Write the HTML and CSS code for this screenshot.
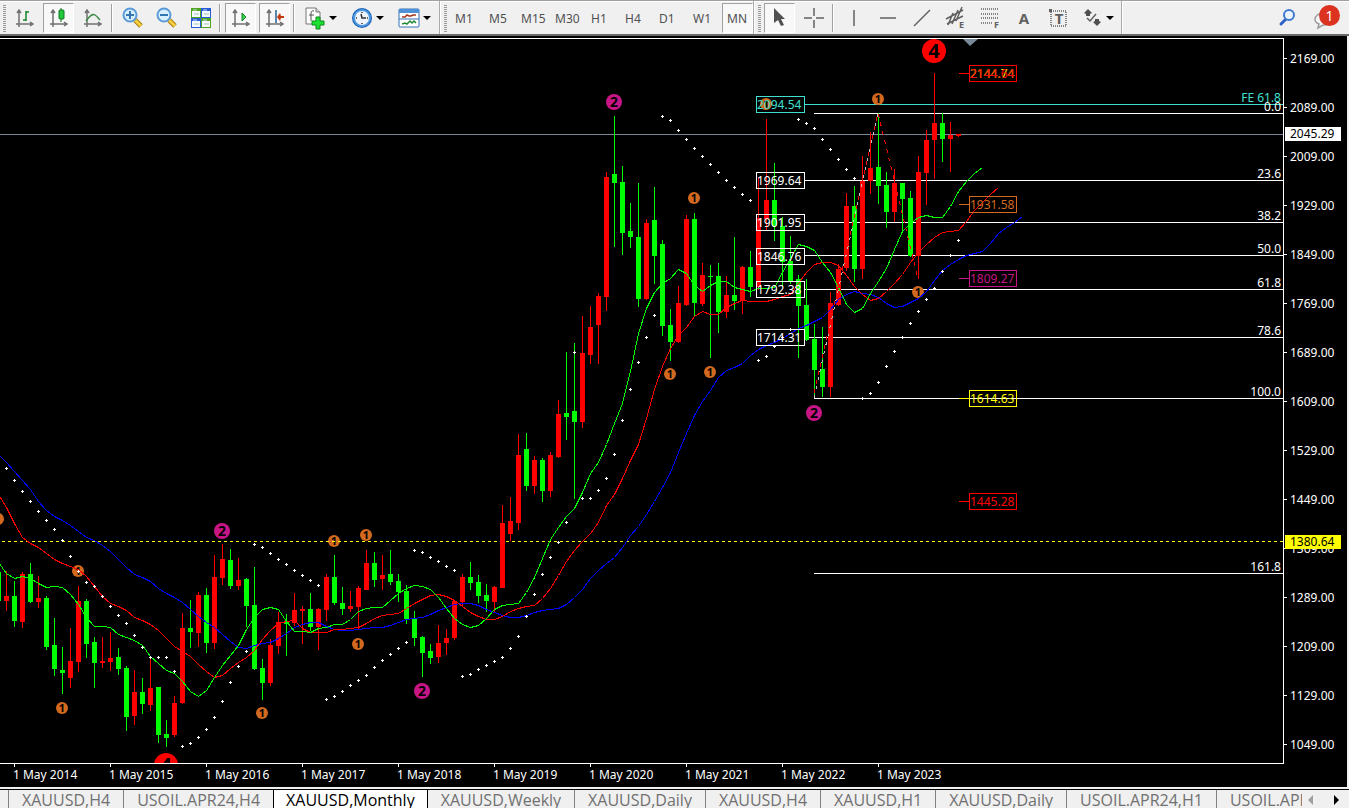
FILE: index.html
```
<!DOCTYPE html>
<html lang="en">
<head>
    <meta charset="UTF-8">
    <meta name="viewport" content="width=device-width, initial-scale=1.0">
    <title>XAUUSD,Monthly</title>
    <link rel="stylesheet" href="styles.css">
</head>
<body>
    <header class="toolbar">
        <div class="group">
            <span class="grip"></span>
            <button class="tool" aria-label="Bar chart">
                <svg width="20" height="20" viewBox="0 0 20 20"><path class="axes" d="M4 19V3M1 16H17M2 5L4 2L6 5M15 14L18 16L15 18"/><path d="M11 3V13M11 4H14M8 12H11" stroke="#14862a" stroke-width="1.500" fill="none"/></svg>
            </button>
            <button class="tool pressed" aria-label="Candlesticks">
                <svg width="20" height="20" viewBox="0 0 20 20"><path class="axes" d="M4 19V3M1 16H17M2 5L4 2L6 5M15 14L18 16L15 18"/><path d="M12 0V14" stroke="#0b6d1b"/><rect x="10" y="2" width="5" height="9" rx="1" fill="#22c83c" stroke="#0b7a1d"/></svg>
            </button>
            <button class="tool" aria-label="Line chart">
                <svg width="20" height="20" viewBox="0 0 20 20"><path class="axes" d="M4 19V3M1 16H17M2 5L4 2L6 5M15 14L18 16L15 18"/><path d="M3 13C6 9 9 5 12 7S15 10 17 12" stroke="#3b8a48" stroke-width="1.500" fill="none"/></svg>
            </button>
            <span class="sep"></span>
            <button class="tool" aria-label="Zoom in">
                <svg width="22" height="22" viewBox="0 0 22 22"><path d="M13 13L19 19" stroke="#a87a12" stroke-width="5"/><path d="M13 13L19 19" stroke="#f5cf3e" stroke-width="3"/><circle cx="8" cy="8" r="6.500" fill="#d9f0ff" stroke="#5a9bd8" stroke-width="2"/><path d="M4 8H12M8 4V12" stroke="#3576b0" stroke-width="2"/></svg>
            </button>
            <button class="tool" aria-label="Zoom out">
                <svg width="22" height="22" viewBox="0 0 22 22"><path d="M13 13L19 19" stroke="#a87a12" stroke-width="5"/><path d="M13 13L19 19" stroke="#f5cf3e" stroke-width="3"/><circle cx="8" cy="8" r="6.500" fill="#d9f0ff" stroke="#5a9bd8" stroke-width="2"/><path d="M4 8H12" stroke="#3576b0" stroke-width="2"/></svg>
            </button>
            <button class="tool" aria-label="Tile windows">
                <svg width="22" height="22" viewBox="0 0 22 22"><path d="M1 1H11V11H1ZM11 11H21V21H11Z" fill="#4fa51f"/><path d="M11 1H21V11H11ZM1 11H11V21H1Z" fill="#2a5bd7"/><path d="M2 4H10V10H2ZM12 14H20V20H12ZM12 4H20V10H12ZM2 14H10V20H2Z" fill="#f4f8ff"/><path d="M3 3H7M13 3H17M3 13H7M13 13H17" stroke="#c9dcf5"/><path d="M4 7H9M14 7H19M4 17H9M14 17H19" stroke="#a9c7b4"/></svg>
            </button>
            <span class="sep"></span>
            <button class="tool pressed" aria-label="Auto scroll">
                <svg width="20" height="20" viewBox="0 0 20 20"><path class="axes" d="M4 19V3M1 16H17M2 5L4 2L6 5M15 14L18 16L15 18"/><path d="M11 5V13L15 9Z" fill="#35d04c" stroke="#12822a"/></svg>
            </button>
            <button class="tool pressed" aria-label="Chart shift">
                <svg width="20" height="20" viewBox="0 0 20 20"><path class="axes" d="M4 19V3M1 16H17M2 5L4 2L6 5M15 14L18 16L15 18"/><path d="M11 2V15" stroke="#2a6291" stroke-width="1.500"/><path d="M12 9L15 5L16 8H19V10H16L15 13Z" fill="#c43a10"/></svg>
            </button>
            <span class="sep"></span>
            <button class="tool drop" aria-label="Indicators">
                <svg width="22" height="24" viewBox="0 0 22 24"><path d="M2 2H12L16 6V18H2Z" fill="#fdfdfd" stroke="#777"/><path d="M12 2V6H16" fill="#ddd" stroke="#777"/><path d="M10 5Q7 4 7 8V15M5 9H10" stroke="#555" fill="none"/><path d="M12 11H16V15H20V19H16V23H12V19H8V15H12Z" fill="#1ee032" stroke="#0b8a1a"/></svg>
                <span class="caret"></span>
            </button>
            <button class="tool drop" aria-label="Periods">
                <svg width="22" height="22" viewBox="0 0 22 22"><circle cx="11" cy="11" r="10" fill="#1a5fb4"/><circle cx="11" cy="11" r="9" fill="#4b97e2"/><circle cx="11" cy="11" r="7" fill="#eef4fa"/><path d="M10 7L11 11H15M11 5V6M11 16V17M5 11H6M16 11H17" stroke="#333" stroke-width="1.500" fill="none"/></svg>
                <span class="caret"></span>
            </button>
            <button class="tool drop" aria-label="Templates">
                <svg width="22" height="22" viewBox="0 0 22 22"><rect x="1" y="2" width="20" height="18" rx="1" fill="#fff" stroke="#3573b5"/><path d="M1 2H21V6H1Z" fill="#4f91d6"/><path d="M1 12H21" stroke="#3573b5"/><path d="M4 10H7L9 8L11 9H13L15 8H18" stroke="#a3341b" stroke-width="1.500" fill="none"/><path d="M4 17L7 16L9 17L12 14L14 16L16 14L18 16" stroke="#228a33" stroke-width="1.500" fill="none"/></svg>
                <span class="caret"></span>
            </button>
        </div>
        <div class="group frames">
            <span class="grip"></span>
            <button class="tool">M1</button>
            <button class="tool">M5</button>
            <button class="tool">M15</button>
            <button class="tool">M30</button>
            <button class="tool">H1</button>
            <button class="tool">H4</button>
            <button class="tool">D1</button>
            <button class="tool">W1</button>
            <button class="tool pressed">MN</button>
        </div>
        <div class="group objects">
            <span class="grip"></span>
            <button class="tool pressed" aria-label="Cursor">
                <svg width="20" height="20" viewBox="0 0 20 20"><path d="M4 0V15L8 12L11 18L14 17L11 11H15Z" fill="#505050"/></svg>
            </button>
            <button class="tool" aria-label="Crosshair">
                <svg width="20" height="20" viewBox="0 0 20 20"><path class="ink" d="M10 0V8M10 12V20M0 10H8M12 10H20"/></svg>
            </button>
            <span class="sep"></span>
            <button class="tool" aria-label="Vertical line">
                <svg width="20" height="20" viewBox="0 0 20 20"><path class="ink" d="M10 2V18"/></svg>
            </button>
            <button class="tool" aria-label="Horizontal line">
                <svg width="20" height="20" viewBox="0 0 20 20"><path class="ink" d="M2 10H18"/></svg>
            </button>
            <button class="tool" aria-label="Trendline">
                <svg width="20" height="20" viewBox="0 0 20 20"><path class="ink" d="M2 18L18 2"/></svg>
            </button>
            <button class="tool" aria-label="Equidistant channel">
                <svg width="22" height="22" viewBox="0 0 22 22"><path class="ink" d="M1 12L18 3M2 17L18 9M3 18L8 6M7 17L13 3M11 14L17 0"/><text x="14" y="21" class="letter">E</text></svg>
            </button>
            <button class="tool" aria-label="Fibonacci retracement">
                <svg width="22" height="22" viewBox="0 0 22 22"><path class="ink dots" d="M2 2H20M2 7H20M2 11H20M2 16H14"/><text x="15" y="21" class="letter">F</text></svg>
            </button>
            <button class="tool" aria-label="Text">
                <svg width="20" height="20" viewBox="0 0 20 20"><text x="10" y="16" class="letter big">A</text></svg>
            </button>
            <button class="tool" aria-label="Text label">
                <svg width="20" height="20" viewBox="0 0 20 20"><rect class="ink dots" x="3" y="3" width="15" height="15"/><path d="M1 1H4V4H1Z" fill="#606060"/><text x="11" y="16" class="letter big">T</text></svg>
            </button>
            <button class="tool drop" aria-label="Arrows">
                <svg width="22" height="22" viewBox="0 0 22 22"><path d="M7 2L11 6L9 7V9H5V7L3 6ZM16 19L20 15L18 14V12H14V14L12 15Z" fill="#505050"/><path class="ink" d="M6 11L9 14L15 7"/></svg>
                <span class="caret"></span>
            </button>
        </div>
        <div class="right">
            <button class="tool" aria-label="Search">
                <svg width="20" height="20" viewBox="0 0 20 20"><path d="M3 16L8 11" stroke="#2d62c4" stroke-width="3" stroke-linecap="round"/><circle cx="11" cy="7" r="5" fill="#eaf3ff" stroke="#3f78cf" stroke-width="2"/></svg>
            </button>
            <button class="tool chat" aria-label="Messages">
                <svg width="22" height="22" viewBox="0 0 22 22"><path d="M9 6C14 6 17 9 17 13S14 18 9 18L4 21L5 17C2 16 1 14 1 12S4 6 9 6Z" fill="#f8f8f8" stroke="#9a9a9a" stroke-width="1.500"/></svg>
                <span class="badge">1</span>
            </button>
        </div>
    </header>

    <main class="chart">
        <div class="plot">
            <svg id="plot" viewBox="0 39 1283 724" role="img" aria-label="XAUUSD monthly chart"></svg>
        </div>
        <div class="price-axis">
            <ul>
                <li>2169.00</li>
                <li>2089.00</li>
                <li>2009.00</li>
                <li>1929.00</li>
                <li>1849.00</li>
                <li>1769.00</li>
                <li>1689.00</li>
                <li>1609.00</li>
                <li>1529.00</li>
                <li>1449.00</li>
                <li>1369.00</li>
                <li>1289.00</li>
                <li>1209.00</li>
                <li>1129.00</li>
                <li>1049.00</li>
            </ul>
            <span class="tag bid">2045.29</span>
            <span class="tag level">1380.64</span>
        </div>
        <ul class="time-axis">
            <li>1 May 2014</li>
            <li>1 May 2015</li>
            <li>1 May 2016</li>
            <li>1 May 2017</li>
            <li>1 May 2018</li>
            <li>1 May 2019</li>
            <li>1 May 2020</li>
            <li>1 May 2021</li>
            <li>1 May 2022</li>
            <li>1 May 2023</li>
        </ul>
    </main>

    <footer class="tabs">
        <nav>
            <button>XAUUSD,H4</button>
            <button>USOIL.APR24,H4</button>
            <button class="active">XAUUSD,Monthly</button>
            <button>XAUUSD,Weekly</button>
            <button>XAUUSD,Daily</button>
            <button>XAUUSD,H4</button>
            <button>XAUUSD,H1</button>
            <button>XAUUSD,Daily</button>
            <button>USOIL.APR24,H1</button>
            <button>USOIL.APR24,Daily</button>
        </nav>
        <div class="scroll">
            <button class="prev" aria-label="Previous tabs"></button>
            <button class="next" aria-label="Next tabs"></button>
        </div>
    </footer>
    <script src="chart.js"></script>
</body>
</html>
```

FILE: styles.css
```
* {
    box-sizing: border-box;
}

body {
    margin: 0;
    height: 100vh;
    display: flex;
    flex-direction: column;
    overflow: hidden;
    background: #f0f0f0;
    font-family: "Noto Sans", Tahoma, sans-serif;
    font-size: 12px;
}

ul {
    list-style: none;
    margin: 0;
    padding: 0;
}

button {
    font: inherit;
    border: none;
    background: none;
    padding: 0;
    cursor: pointer;
}

/* toolbar */
.toolbar {
    display: flex;
    flex: none;
    height: 36px;
    border-top: 1px solid #a0a0a0;
    border-bottom: 2px solid #696969;
    box-shadow: inset 0 1px #fff;
}

.group {
    display: flex;
    align-items: center;
    gap: 3px;
    padding: 1px 2px 0 3px;
    border-right: 2px groove #fff;
}

.frames {
    padding-right: 0;
}

.objects {
    padding-right: 1px;
}

.grip {
    width: 3px;
    height: 27px;
    background: repeating-linear-gradient(#999 0 1px, #f0f0f0 1px 2px);
}

.sep {
    width: 2px;
    height: 28px;
    margin-right: 1px;
    border-left: 1px solid #a0a0a0;
    border-right: 1px solid #fff;
}

.tool {
    display: flex;
    align-items: center;
    justify-content: center;
    width: 31px;
    height: 30px;
    color: #505050;
}

.tool svg {
    overflow: visible;
}

.pressed {
    border: 1px solid #fff;
    border-top-color: #a0a0a0;
    border-left-color: #a0a0a0;
    background: #f8f8f8;
}

.drop {
    width: 44px;
    justify-content: flex-start;
    padding-left: 5px;
    gap: 3px;
}

.caret {
    border: 4px solid transparent;
    border-top-color: #000;
    border-bottom: none;
}

.frames .tool {
    justify-content: flex-start;
    padding-left: 5px;
}

.frames .tool:nth-child(4),
.frames .tool:nth-child(5) {
    padding-left: 3px;
}

.frames .pressed {
    padding-left: 4px;
}

.axes {
    fill: none;
    stroke: #707070;
    stroke-width: 1.5;
}

.ink {
    fill: none;
    stroke: #606060;
    stroke-width: 1.5;
}

.dots {
    stroke-dasharray: 1 1;
}

.letter {
    font-size: 9px;
    font-weight: bold;
    fill: #606060;
}

.big {
    font-size: 15px;
    text-anchor: middle;
}

.right {
    display: flex;
    align-items: center;
    gap: 6px;
    margin-left: auto;
    padding-right: 9px;
}

.chat {
    position: relative;
}

.badge {
    position: absolute;
    top: 2px;
    right: 0;
    width: 21px;
    height: 21px;
    border-radius: 50%;
    background: #dc3220;
    color: #fff;
    font-size: 14px;
    line-height: 21px;
    text-align: center;
}

/* chart */
.chart {
    display: grid;
    grid-template-columns: 1fr 63px;
    padding-top: 2px;
    margin-right: 2px;
    background: #000;
    color: #fff;
}

.plot {
    border: 1px solid #fff;
    border-left: none;
}

.plot svg {
    display: block;
    width: 100%;
}

.price-axis {
    position: relative;
}

.price-axis ul {
    margin: -4px 0 -5px;
}

.price-axis li {
    display: flex;
    align-items: center;
    gap: 3px;
    height: 49px;
}

.price-axis li::before {
    content: "";
    width: 3px;
    height: 1px;
    background: #fff;
}

.tag {
    position: absolute;
    left: 1px;
    width: 56px;
    padding-left: 5px;
    line-height: 14px;
    color: #000;
}

.bid {
    top: 89px;
    background: #fff;
}

.level {
    top: 497px;
    background: #ff0;
}

.time-axis {
    grid-column: 1 / 3;
    display: flex;
    height: 23px;
    padding-left: 13px;
}

.time-axis li {
    width: 96px;
    line-height: 16px;
}

.time-axis li::before {
    content: "";
    display: block;
    width: 1px;
    height: 3px;
    margin-left: 1px;
    background: #fff;
}

/* plot items */
.up {
    fill: #f00;
}

.down {
    fill: #0f0;
}

.line {
    fill: none;
    stroke-width: 1;
}

.crisp {
    shape-rendering: crispEdges;
}

.label {
    font-size: 12px;
}

.mark {
    font-weight: bold;
    text-anchor: middle;
}

/* chart tabs */
.tabs {
    display: flex;
    flex: 1;
    min-height: 19px;
    margin-top: 2px;
    border-top: 1px solid #000;
    overflow: hidden;
}

.tabs nav {
    display: flex;
    flex: 1;
    min-width: 0;
    padding-left: 8px;
    overflow: hidden;
}

.tabs nav button {
    flex: none;
    height: 21px;
    padding: 0 13px;
    border-left: 1px solid #808080;
    font-family: "Open Sans", "Segoe UI", sans-serif;
    font-size: 16px;
    line-height: 21px;
    color: #707070;
}

.tabs nav .active {
    padding: 0 12px;
    background: #fff;
    color: #000;
    border-left-color: #000;
}

.tabs nav .active + button {
    border-left-color: #000;
}

.scroll {
    display: flex;
    gap: 21px;
    width: 47px;
    height: 20px;
    padding-left: 6px;
    align-items: center;
}

.scroll button {
    border: 5px solid transparent;
}

.scroll .prev {
    border-left: none;
    border-right-color: #a0a0a0;
}

.scroll .next {
    border-right: none;
    border-left-color: #000;
}
```

FILE: chart.js
```
const svg = document.getElementById('plot');
const STEP = 8;
const FIRST = -2;

// one row per month: high, body top, body bottom, low, 1 = up / 0 = down
const candles = [
    [572, 572, 601, 601, 0], [571, 596, 601, 611, 1], [581, 596, 621, 627, 0], [572, 574, 622, 628, 1],
    [563, 574, 602, 603, 0], [576, 598, 602, 608, 1], [596, 598, 647, 650, 0], [618, 645, 669, 676, 0],
    [647, 670, 673, 694, 0], [628, 661, 678, 688, 1], [586, 601, 662, 672, 1], [599, 601, 644, 658, 0],
    [637, 642, 663, 688, 0], [637, 661, 663, 668, 1], [632, 658, 662, 671, 1], [648, 657, 669, 675, 0],
    [666, 668, 717, 731, 0], [670, 692, 716, 725, 1], [678, 692, 704, 714, 0], [657, 688, 705, 711, 1],
    [687, 687, 735, 743, 0], [720, 734, 738, 747, 0], [696, 703, 735, 737, 1], [613, 628, 703, 704, 1],
    [600, 628, 632, 648, 0], [592, 595, 633, 647, 1], [588, 595, 643, 653, 0], [555, 577, 643, 649, 1],
    [544, 559, 578, 585, 1], [549, 560, 586, 589, 0], [558, 580, 586, 590, 1], [578, 579, 606, 627, 0],
    [567, 605, 669, 670, 0], [659, 668, 683, 700, 0], [639, 645, 683, 686, 1], [612, 622, 646, 654, 1],
    [614, 622, 624, 656, 0], [593, 610, 623, 626, 1], [606, 609, 611, 644, 1], [593, 609, 627, 631, 0],
    [608, 609, 627, 650, 1], [574, 577, 610, 621, 1], [555, 577, 603, 605, 0], [587, 603, 609, 615, 0],
    [591, 606, 609, 612, 1], [586, 588, 607, 630, 1], [550, 563, 590, 590, 1], [552, 563, 580, 587, 0],
    [555, 575, 579, 590, 1], [550, 574, 582, 585, 0], [574, 581, 592, 602, 0], [585, 591, 619, 624, 0],
    [611, 619, 638, 646, 0], [636, 637, 653, 677, 0], [644, 651, 658, 664, 0], [625, 643, 657, 663, 1],
    [629, 638, 643, 655, 1], [600, 601, 638, 640, 1], [574, 577, 602, 606, 1], [562, 577, 583, 590, 0],
    [575, 582, 596, 603, 0], [584, 595, 601, 612, 0], [586, 587, 602, 612, 1], [505, 523, 588, 588, 1],
    [497, 521, 534, 541, 1], [434, 455, 523, 530, 1], [433, 449, 486, 491, 0], [456, 460, 486, 494, 1],
    [458, 460, 491, 502, 0], [452, 455, 491, 497, 1], [400, 414, 457, 458, 1], [352, 413, 417, 440, 0],
    [343, 411, 422, 499, 0], [316, 353, 422, 428, 1], [306, 327, 355, 364, 1], [293, 296, 325, 364, 1],
    [172, 177, 297, 311, 1], [116, 174, 183, 247, 0], [166, 182, 233, 255, 0], [203, 231, 237, 248, 0],
    [183, 237, 299, 307, 0], [219, 223, 299, 300, 1], [187, 220, 256, 284, 0], [240, 244, 326, 336, 0],
    [309, 325, 342, 361, 0], [286, 303, 342, 343, 1], [215, 219, 305, 306, 1], [213, 219, 303, 316, 0],
    [263, 275, 304, 306, 1], [265, 276, 277, 358, 0], [263, 276, 312, 333, 0], [276, 295, 312, 318, 1],
    [237, 295, 301, 310, 0], [266, 267, 301, 314, 1], [251, 267, 287, 297, 0], [177, 218, 287, 290, 1],
    [119, 200, 219, 230, 1], [163, 200, 226, 241, 0], [217, 226, 262, 287, 0], [236, 261, 281, 284, 0],
    [275, 279, 306, 358, 0], [279, 305, 340, 341, 0], [324, 339, 370, 398, 0], [327, 369, 387, 397, 0],
    [292, 303, 387, 397, 1], [264, 269, 305, 306, 1], [193, 206, 268, 271, 1], [186, 206, 269, 282, 0],
    [156, 181, 269, 279, 1], [132, 168, 181, 194, 1], [113, 167, 186, 204, 0], [172, 185, 212, 228, 0],
    [169, 183, 212, 222, 1], [183, 183, 199, 233, 0], [191, 198, 256, 257, 0], [156, 172, 256, 279, 1],
    [130, 140, 173, 205, 1], [73, 123, 140, 179, 1], [113, 123, 139, 162, 0], [122, 135, 139, 172, 1],
    [134, 134, 136, 137, 1]
];

// moving averages, one value per month
const fast = [562, 573, 578, 576, 578, 583, 587, 586, 587, 594, 604, 617, 626, 626, 627, 634, 637, 640, 645, 656,
    663, 670, 673, 681, 691, 696, 690, 677, 665, 655, 645, 629, 617, 609, 607, 609, 621, 631, 631, 632,
    628, 627, 624, 624, 619, 611, 608, 607, 607, 600, 593, 588, 585, 586, 589, 597, 608, 618, 624, 627,
    625, 618, 609, 605, 604, 603, 592, 577, 558, 539, 527, 516, 508, 492, 473, 462, 444, 423, 403, 371,
    333, 308, 292, 283, 278, 269, 273, 285, 291, 285, 281, 281, 287, 289, 291, 288, 288, 287, 272, 258,
    244, 246, 250, 262, 272, 287, 304, 312, 308, 293, 281, 268, 249, 231, 223, 217, 215, 217, 217, 206,
    191, 181, 173, 167];

const middle = [494, 507, 523, 537, 543, 547, 553, 559, 563, 566, 569, 576, 586, 596, 603, 606, 610, 617, 620, 624,
    630, 638, 646, 651, 656, 664, 671, 677, 675, 668, 662, 657, 650, 639, 630, 623, 621, 620, 628, 632,
    632, 632, 629, 629, 628, 627, 623, 618, 615, 614, 613, 608, 603, 599, 595, 594, 596, 600, 606, 612,
    616, 619, 619, 616, 611, 608, 606, 605, 598, 588, 575, 561, 550, 541, 533, 522, 505, 494, 478, 460,
    444, 418, 389, 366, 348, 335, 327, 316, 311, 314, 314, 307, 303, 300, 301, 301, 301, 299, 296, 294,
    283, 272, 264, 262, 262, 265, 275, 286, 294, 300, 298, 291, 283, 274, 262, 252, 244, 237, 232, 231,
    230, 221, 210, 202, 194, 187];

const slow = [454, 462, 471, 480, 489, 501, 510, 516, 520, 525, 531, 537, 540, 545, 551, 559, 567, 574, 577, 581,
    588, 593, 597, 602, 609, 616, 622, 627, 634, 641, 647, 648, 645, 643, 642, 638, 633, 627, 624, 622,
    622, 626, 629, 630, 630, 629, 628, 627, 627, 625, 622, 619, 618, 617, 614, 610, 607, 604, 603, 603,
    605, 609, 612, 615, 617, 617, 615, 612, 610, 609, 608, 604, 597, 589, 578, 570, 563, 557, 547, 535,
    526, 514, 501, 487, 472, 452, 433, 415, 401, 390, 377, 370, 367, 363, 355, 349, 345, 342, 338, 333,
    328, 325, 321, 317, 309, 299, 294, 291, 293, 294, 297, 303, 307, 306, 302, 298, 291, 280, 270, 264,
    259, 255, 253, 251, 243, 233, 227, 222, 216];

// parabolic SAR, starts one month later
const sar = [468, 480, 491, 501, 511, 520, 529, 540, 556, 571, 582, 586, 596, 606, 615, 623, 635, 647, 657, 657,
    657, 671, 746, 743, 737, 729, 717, 701, 682, 666, 651, 544, 547, 553, 559, 564, 570, 575, 580, 585,
    699, 696, 691, 685, 680, 675, 667, 660, 654, 648, 642, 550, 552, 557, 561, 566, 570, 676, 674, 669,
    665, 661, 657, 648, 636, 616, 594, 574, 557, 542, 522, 352, 498, 498, 490, 478, 454, 420, 389, 362,
    337, 315, 116, 120, 130, 139, 148, 156, 164, 172, 180, 187, 194, 200, 360, 356, 346, 337, 329, 119,
    123, 128, 139, 149, 159, 169, 178, 398, 393, 382, 366, 351, 337, 323, 311, 299, 288, 271, 255, 240];

const fibo = [['0.0', 113], ['23.6', 180], ['38.2', 222], ['50.0', 255], ['61.8', 289], ['78.6', 337], ['100.0', 398], ['161.8', 573]];

const boxes = [
    [756, 104, '2094.54', '#40e0d0'], [756, 180, '1969.64', '#fff'], [756, 222, '1901.95', '#fff'],
    [756, 256, '1846.76', '#fff'], [756, 289, '1792.38', '#fff'], [756, 337, '1714.31', '#fff'],
    [969, 73, '2144.64', '#f00'], [969, 204, '1931.58', '#d2691e'], [969, 278, '1809.27', '#c71585'],
    [969, 398, '1614.63', '#ff0'], [969, 501, '1445.28', '#f00']
];

// swing marks: x, y, level
const marks = [
    [-2, 519, 1], [62, 708, 1], [78, 571, 1], [262, 713, 1], [334, 541, 1], [358, 644, 1], [366, 535, 1],
    [670, 374, 1], [694, 198, 1], [710, 372, 1], [766, 104, 1], [878, 99, 1], [918, 292, 1],
    [222, 531, 2], [422, 691, 2], [614, 102, 2], [814, 413, 2], [166, 765, 4], [934, 51, 4]
];
const markStyle = {
    1: { r: 6, color: '#d2691e', size: 11 },
    2: { r: 8, color: '#c71585', size: 14 },
    4: { r: 12, color: '#f00', size: 20 }
};

function add(name, attrs, text) {
    const el = document.createElementNS('http://www.w3.org/2000/svg', name);
    for (const key in attrs) {
        el.setAttribute(key, attrs[key]);
    }
    if (text) {
        el.textContent = text;
    }
    svg.appendChild(el);
}

function bar(x, y, width, height, fill) {
    add('rect', { x, y, width, height, fill, class: 'crisp' });
}

function average(values, stroke) {
    const points = values.map((y, i) => `${FIRST + i * STEP + 0.5},${y + 0.5}`).join(' ');
    add('polyline', { points, stroke, class: 'line crisp' });
}

// price lines and levels
bar(0, 134, 1283, 1, '#778899');
bar(805, 104, 478, 1, '#40e0d0');
fibo.forEach(([, y], i) => {
    const x = i > 0 && i < 6 ? 805 : 814;
    bar(x, y, 1283 - x, 1, '#fff');
});

marks.forEach(([x, y, level]) => {
    const s = markStyle[level];
    add('circle', { cx: x, cy: y, r: s.r, fill: s.color });
    add('text', { x, y: y + Math.round(s.size * 0.36), 'font-size': s.size, class: 'mark' }, String(level));
});

add('path', { d: 'M2 541.5H1283', stroke: '#ff0', 'stroke-dasharray': '3 3', class: 'line crisp' });

candles.forEach(([high, top, bottom, low, up], i) => {
    const x = FIRST + i * STEP;
    const cls = up ? 'up crisp' : 'down crisp';
    add('rect', { x, y: high, width: 1, height: low - high, class: cls });
    add('rect', { x: x - 2, y: top, width: 5, height: bottom - top, class: cls });
});

average(slow, '#00f');
average(middle, '#f00');
average(fast, '#0f0');

sar.forEach((y, i) => {
    const x = 6 + i * STEP;
    bar(x - 1, y, 3, 1, '#fff');
    bar(x, y - 1, 1, 3, '#fff');
});

add('path', { d: 'M814 398L878 113', stroke: '#c0c0c0', 'stroke-dasharray': '3 6', class: 'line crisp' });
add('path', { d: 'M814 393L878 113L918 279', stroke: '#f00', 'stroke-dasharray': '4 5', class: 'line crisp' });
add('path', { d: 'M963 39H978L970 46Z', fill: '#778899' });

// value boxes
add('text', { x: 970, y: 78, fill: '#ff0', class: 'label' }, '2144.74');
boxes.forEach(([x, y, value, color]) => {
    const width = x > 900 ? 47 : 48;
    add('rect', { x: x + 0.5, y: y - 7.5, width, height: 16, stroke: color, class: 'line crisp' });
    if (x > 900) {
        bar(x - 10, y, 10, 1, color);
    }
    add('text', { x: x + 1, y: y + 5, fill: color, class: 'label' }, value);
});

fibo.forEach(([name, y]) => {
    add('text', { x: 1281, y: y - 2, fill: '#fff', 'text-anchor': 'end', class: 'label' }, name);
});
add('text', { x: 1281, y: 102, fill: '#40e0d0', 'text-anchor': 'end', class: 'label' }, 'FE 61.8');
```
